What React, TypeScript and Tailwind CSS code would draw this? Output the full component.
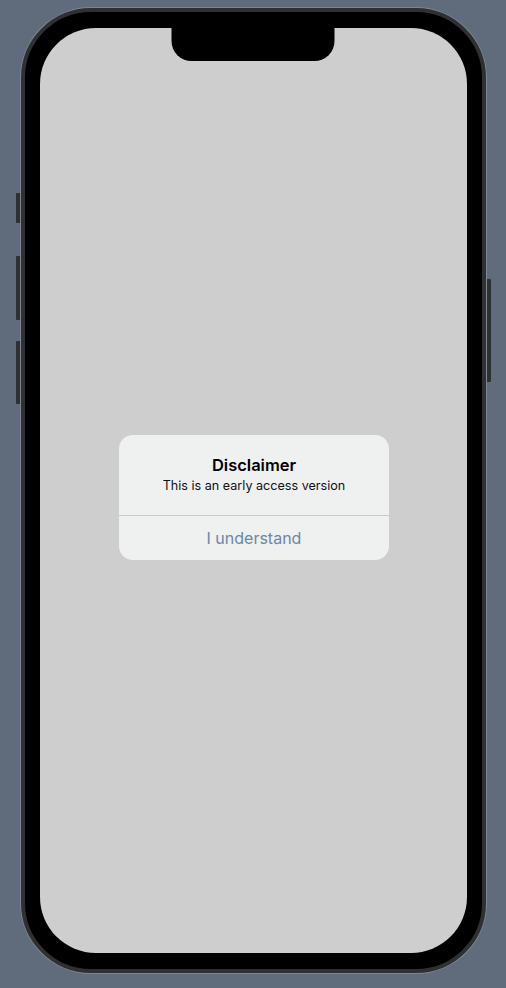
export default function App() {
  return (
    <div
      className="relative w-[506px] h-[988px] bg-[#606c7b] pt-[8px] overflow-hidden"
      style={{ fontFamily: "Inter, 'Noto Sans', 'Liberation Sans', sans-serif" }}
    >
      {/* side buttons */}
      <div className="absolute left-[16px] top-[193px] w-[4px] h-[30px] bg-[#2f3031] rounded-l-[1px]" />
      <div className="absolute left-[16px] top-[256px] w-[4px] h-[64px] bg-[#2f3031] rounded-l-[1px]" />
      <div className="absolute left-[16px] top-[341px] w-[4px] h-[63px] bg-[#2f3031] rounded-l-[1px]" />
      <div className="absolute left-[487px] top-[279px] w-[4px] h-[103px] bg-[#2f3031] rounded-r-[1px]" />

      {/* phone body */}
      <div className="mx-auto w-[465px] h-[965px] rounded-[70px] border-[4px] border-[#2f3031] bg-black px-[15px] py-[16px] ring-1 ring-[#7d8692]">
        <div className="relative h-full w-full rounded-[56px] bg-[#cecece] flex items-center justify-center pt-[14px] pl-[2px]">
          {/* notch */}
          <div className="absolute left-1/2 top-0 -translate-x-1/2 w-[163px] h-[33px] bg-black rounded-b-[20px]" />

          {/* alert */}
          <div className="w-[270px] rounded-[14px] bg-[#eff0f0] overflow-hidden text-center">
            <div className="pt-[19px] pb-[21px] px-4">
              <div className="text-[16.5px] leading-[22px] font-semibold text-black">Disclaimer</div>
              <div className="mt-[2px] text-[12.6px] leading-[16px] text-[#111]">
                This is an early access version
              </div>
            </div>
            <div className="border-t border-[#c7c9cb]">
              <button className="w-full h-[44px] text-[16px] leading-[22px] text-[#6b87a4]">
                I understand
              </button>
            </div>
          </div>
        </div>
      </div>
    </div>
  );
}
